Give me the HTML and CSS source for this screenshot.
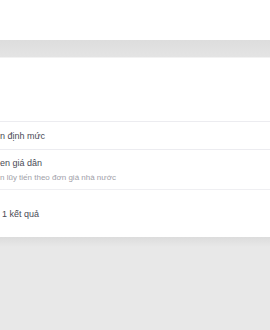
FILE: index.html
```html
<!DOCTYPE html>
<html lang="vi">
<head>
    <meta charset="UTF-8">
    <meta name="viewport" content="width=device-width, initial-scale=1.0">
    <title>Kết quả tìm kiếm</title>
    <link rel="stylesheet" href="styles.css">
</head>
<body>

    <!-- Top bar -->
    <div class="topbar"></div>

    <!-- Toolbar band -->
    <div class="band"></div>

    <!-- Results card -->
    <div class="card">
        <div class="card-head"></div>

        <div class="row row-single">
            <div class="title">n định mức</div>
        </div>

        <div class="row row-double">
            <div class="title">en giá dân</div>
            <div class="sub">n lũy tiến theo đơn giá nhà nước</div>
        </div>

        <div class="row row-count">
            <div class="title">1 kết quả</div>
        </div>
    </div>

    <!-- Page background -->
    <div class="backdrop"></div>

</body>
</html>
```

FILE: styles.css
```css
* {
    margin: 0;
    padding: 0;
    box-sizing: border-box;
}

html, body {
    height: 100%;
}

body {
    font-family: 'Liberation Sans', Arial, sans-serif;
    display: flex;
    flex-direction: column;
    background-color: #E8E8E8;
    color: #4A4A55;
}

/* Top bar */
.topbar {
    height: 40px;
    background-color: #FFFFFF;
}

/* Toolbar band */
.band {
    height: 18px;
    background: linear-gradient(#DDDDDD, #E4E4E4);
    border-bottom: 1px solid #F2F2F2;
}

/* Results card */
.card {
    background-color: #FFFFFF;
}

.card-head {
    height: 63px;
}

.row {
    border-top: 1px solid #ECECF0;
    display: flex;
    flex-direction: column;
    justify-content: center;
}

.row-single {
    height: 28px;
}

.row-double {
    height: 40px;
    gap: 5px;
}

.row-count {
    height: 48px;
    border-top-color: #EFEFF2;
    padding-left: 2px;
}

.title {
    font-size: 9px;
    color: #4A4A55;
}

.sub {
    font-size: 8px;
    color: #A0A0A8;
}

/* Page background */
.backdrop {
    flex: 1;
    background: linear-gradient(#DCDCDC, #E8E8E8 10px);
}
```
